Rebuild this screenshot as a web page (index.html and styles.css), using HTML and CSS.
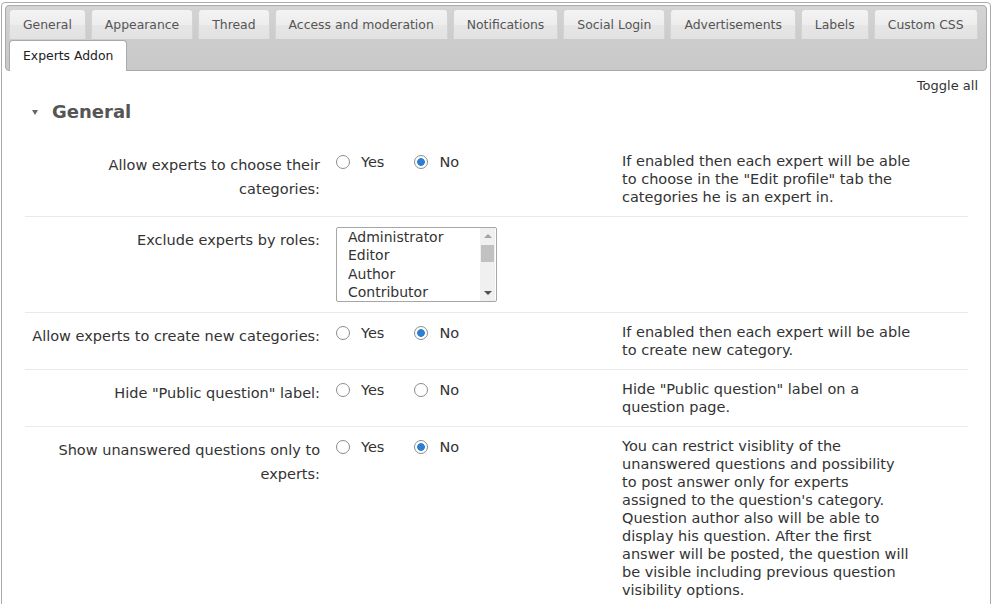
FILE: index.html
```html
<!DOCTYPE html>
<html lang="en">
<head>
  <meta charset="UTF-8">
  <title>Experts Addon - Settings</title>
  <link rel="stylesheet" href="styles.css">
</head>
<body>
  <div class="wrap">
    <div class="tabs">
      <div class="tab-row">
        <a class="tab" href="#">General</a>
        <a class="tab" href="#">Appearance</a>
        <a class="tab" href="#">Thread</a>
        <a class="tab" href="#">Access and moderation</a>
        <a class="tab" href="#">Notifications</a>
        <a class="tab" href="#">Social Login</a>
        <a class="tab" href="#">Advertisements</a>
        <a class="tab" href="#">Labels</a>
        <a class="tab" href="#">Custom CSS</a>
      </div>
      <div class="tab-row second">
        <a class="tab active" href="#">Experts Addon</a>
      </div>
    </div>

    <div class="panel">
      <div class="toggle-all"><a href="#">Toggle all</a></div>
      <h2 class="section-title"><span class="caret"></span>General</h2>

      <div class="section">
        <div class="row">
          <div class="row-label">Allow experts to choose their categories:</div>
          <div class="row-input">
            <div class="radios">
              <label class="radio"><input type="radio" name="choose_cat"> Yes</label>
              <label class="radio"><input type="radio" name="choose_cat" checked> No</label>
            </div>
          </div>
          <div class="row-desc">If enabled then each expert will be able to choose in the "Edit profile" tab the categories he is an expert in.</div>
        </div>

        <div class="row">
          <div class="row-label">Exclude experts by roles:</div>
          <div class="row-input">
            <div class="listbox">
              <ul>
                <li>Administrator</li>
                <li>Editor</li>
                <li>Author</li>
                <li>Contributor</li>
              </ul>
              <div class="scrollbar">
                <span class="arrow up"></span>
                <span class="thumb"></span>
                <span class="track"></span>
                <span class="arrow down"></span>
              </div>
            </div>
          </div>
          <div class="row-desc"></div>
        </div>

        <div class="row">
          <div class="row-label">Allow experts to create new categories:</div>
          <div class="row-input">
            <div class="radios">
              <label class="radio"><input type="radio" name="create_cat"> Yes</label>
              <label class="radio"><input type="radio" name="create_cat" checked> No</label>
            </div>
          </div>
          <div class="row-desc">If enabled then each expert will be able to create new category.</div>
        </div>

        <div class="row">
          <div class="row-label">Hide "Public question" label:</div>
          <div class="row-input">
            <div class="radios">
              <label class="radio"><input type="radio" name="hide_public"> Yes</label>
              <label class="radio"><input type="radio" name="hide_public"> No</label>
            </div>
          </div>
          <div class="row-desc">Hide "Public question" label on a question page.</div>
        </div>

        <div class="row">
          <div class="row-label">Show unanswered questions only to experts:</div>
          <div class="row-input">
            <div class="radios">
              <label class="radio"><input type="radio" name="unanswered"> Yes</label>
              <label class="radio"><input type="radio" name="unanswered" checked> No</label>
            </div>
          </div>
          <div class="row-desc">You can restrict visiblity of the unanswered questions and possibility to post answer only for experts assigned to the question's category. Question author also will be able to display his question. After the first answer will be posted, the question will be visible including previous question visibility options.</div>
        </div>
      </div>
    </div>
  </div>
</body>
</html>
```

FILE: styles.css
```css
* { box-sizing: border-box; }
html, body { margin: 0; padding: 0; overflow: hidden; }
body { font-family: "DejaVu Sans", Verdana, sans-serif; font-size: 13px; color: #333; background: #fff; }
a { color: inherit; text-decoration: none; }

.wrap { width: 990px; margin: 2px 0 0 1px; padding: 2px 3px 10px; border: 1px solid #aaa; border-radius: 4px; background: #fff; }

/* tabs */
.tabs { border: 1px solid #aaa; border-radius: 4px; background: linear-gradient(#d4d4d4, #cccccc 50%, #c9c9c9); padding: 3px 3px 0; }
.tab-row { display: flex; gap: 5px; }
.tab-row.second { margin-top: 1px; }
.tab { display: block; padding: 6px 13px; font-size: 12.4px; line-height: 17px; white-space: nowrap; color: #555; border: 1px solid #d3d3d3; border-bottom: 0; border-radius: 4px 4px 0 0; background: linear-gradient(#f3f3f3, #ededed 50%, #e6e6e6 51%, #e2e2e2); }
.tab.active { background: #fff; border-color: #aaa; color: #212121; padding-bottom: 7px; margin-bottom: -1px; }

/* panel */
.panel { padding: 6px 9px 0 20px; }
.toggle-all { text-align: right; line-height: 18px; color: #333; }
.section-title { margin: 5px 0 18px; font-size: 18px; line-height: 24px; font-weight: bold; color: #555; display: flex; align-items: center; }
.caret { width: 0; height: 0; margin: 0 14px 0 7px; border-top: 5px solid #666; border-left: 3px solid transparent; border-right: 3px solid transparent; }

.section { margin-right: 10px; }
.row { display: grid; grid-template-columns: 297px 272px 290px; column-gap: 14px; padding: 10px 0; border-bottom: 1px solid #e9e9e9; font-size: 14.5px; }
.row-label { text-align: right; padding: 1px 2px 0 5px; line-height: 24px; color: #333; }
.row-desc { line-height: 18px; color: #333; }

/* radios */
.radios { display: flex; gap: 30px; }
.radio { display: flex; align-items: center; gap: 11px; line-height: 20px; color: #333; }
.radio input { appearance: none; -webkit-appearance: none; width: 14px; height: 14px; margin: 0; border: 1px solid #8c8c8c; border-radius: 50%; background: #fff; }
.radio input:checked { background: radial-gradient(circle, #2c7fd3 0, #2c7fd3 3.5px, #fff 4.2px); }

/* roles list */
.listbox { display: flex; width: 161px; height: 75px; border: 1px solid #a6a6a6; border-radius: 2px; background: #fff; overflow: hidden; }
.listbox ul { flex: 1; margin: 0; padding: 0 0 0 11px; list-style: none; font-size: 14px; line-height: 18.3px; color: #333; }
.scrollbar { width: 15px; margin-right: 1px; background: #f0f0f0; display: flex; flex-direction: column; align-items: center; }
.arrow { flex: none; height: 16px; width: 100%; display: flex; align-items: center; justify-content: center; }
.arrow::before { content: ""; border-left: 4px solid transparent; border-right: 4px solid transparent; }
.arrow.up::before { border-bottom: 4px solid #a3a3a3; }
.arrow.down::before { border-top: 4px solid #505050; }
.thumb { flex: none; width: 13px; height: 17px; margin-top: 1px; background: #c1c1c1; }
.track { flex: 1; }
```
